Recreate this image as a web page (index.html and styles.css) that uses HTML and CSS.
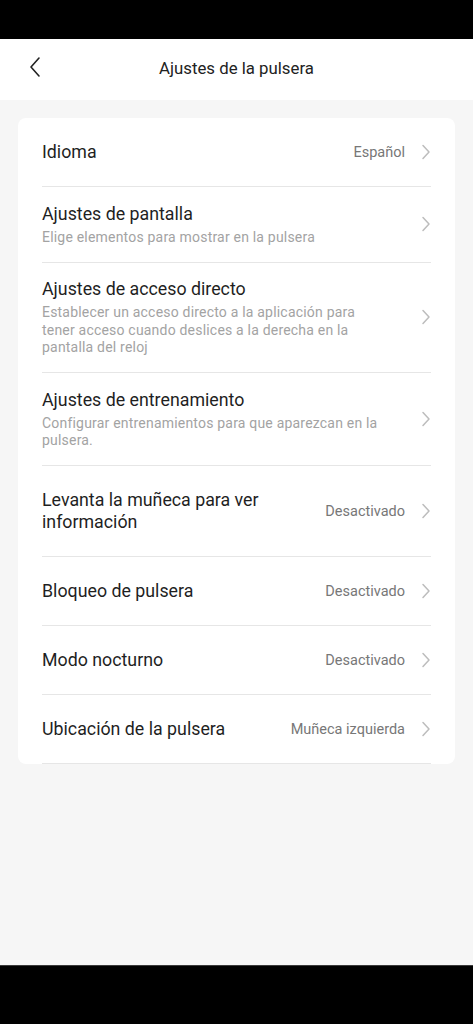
FILE: index.html
```html
<!DOCTYPE html>
<html lang="es">
<head>
<meta charset="utf-8">
<meta name="viewport" content="width=device-width, initial-scale=1">
<title>Ajustes de la pulsera</title>
<link rel="stylesheet" href="styles.css">
</head>
<body>
<div class="screen">
  <div class="status-bar"></div>
  <header class="app-header">
    <button class="back" aria-label="Atrás">
      <svg width="14" height="22" viewBox="0 0 14 22"><path d="M11 2 L3 11 L11 20" fill="none" stroke="#222" stroke-width="1.6" stroke-linecap="round" stroke-linejoin="round"/></svg>
    </button>
    <h1 class="title">Ajustes de la pulsera</h1>
  </header>
  <main class="content">
    <section class="card">
      <div class="row row-plain">
        <div class="row-text"><div class="row-title">Idioma</div></div>
        <span class="row-value">Español</span>
        <svg class="chev" width="10" height="16" viewBox="0 0 10 16"><path d="M2 1.5 L8 8 L2 14.5" fill="none" stroke="#bdbdbd" stroke-width="1.5" stroke-linecap="round" stroke-linejoin="round"/></svg>
      </div>
      <div class="row row-sub">
        <div class="row-text">
          <div class="row-title">Ajustes de pantalla</div>
          <div class="row-desc">Elige elementos para mostrar en la pulsera</div>
        </div>
        <svg class="chev" width="10" height="16" viewBox="0 0 10 16"><path d="M2 1.5 L8 8 L2 14.5" fill="none" stroke="#bdbdbd" stroke-width="1.5" stroke-linecap="round" stroke-linejoin="round"/></svg>
      </div>
      <div class="row row-sub">
        <div class="row-text">
          <div class="row-title">Ajustes de acceso directo</div>
          <div class="row-desc">Establecer un acceso directo a la aplicación para tener acceso cuando deslices a la derecha en la pantalla del reloj</div>
        </div>
        <svg class="chev" width="10" height="16" viewBox="0 0 10 16"><path d="M2 1.5 L8 8 L2 14.5" fill="none" stroke="#bdbdbd" stroke-width="1.5" stroke-linecap="round" stroke-linejoin="round"/></svg>
      </div>
      <div class="row row-sub">
        <div class="row-text">
          <div class="row-title">Ajustes de entrenamiento</div>
          <div class="row-desc">Configurar entrenamientos para que aparezcan en la pulsera.</div>
        </div>
        <svg class="chev" width="10" height="16" viewBox="0 0 10 16"><path d="M2 1.5 L8 8 L2 14.5" fill="none" stroke="#bdbdbd" stroke-width="1.5" stroke-linecap="round" stroke-linejoin="round"/></svg>
      </div>
      <div class="row row-plain">
        <div class="row-text"><div class="row-title narrow">Levanta la muñeca para ver información</div></div>
        <span class="row-value">Desactivado</span>
        <svg class="chev" width="10" height="16" viewBox="0 0 10 16"><path d="M2 1.5 L8 8 L2 14.5" fill="none" stroke="#bdbdbd" stroke-width="1.5" stroke-linecap="round" stroke-linejoin="round"/></svg>
      </div>
      <div class="row row-plain">
        <div class="row-text"><div class="row-title">Bloqueo de pulsera</div></div>
        <span class="row-value">Desactivado</span>
        <svg class="chev" width="10" height="16" viewBox="0 0 10 16"><path d="M2 1.5 L8 8 L2 14.5" fill="none" stroke="#bdbdbd" stroke-width="1.5" stroke-linecap="round" stroke-linejoin="round"/></svg>
      </div>
      <div class="row row-plain">
        <div class="row-text"><div class="row-title">Modo nocturno</div></div>
        <span class="row-value">Desactivado</span>
        <svg class="chev" width="10" height="16" viewBox="0 0 10 16"><path d="M2 1.5 L8 8 L2 14.5" fill="none" stroke="#bdbdbd" stroke-width="1.5" stroke-linecap="round" stroke-linejoin="round"/></svg>
      </div>
      <div class="row row-plain">
        <div class="row-text"><div class="row-title">Ubicación de la pulsera</div></div>
        <span class="row-value">Muñeca izquierda</span>
        <svg class="chev" width="10" height="16" viewBox="0 0 10 16"><path d="M2 1.5 L8 8 L2 14.5" fill="none" stroke="#bdbdbd" stroke-width="1.5" stroke-linecap="round" stroke-linejoin="round"/></svg>
      </div>
    </section>
  </main>
  <div class="nav-bar"></div>
</div>
</body>
</html>
```

FILE: styles.css
```css
html, body {
  margin: 0;
  padding: 0;
}

body {
  font-family: Roboto, "Noto Sans", "Liberation Sans", sans-serif;
  background: #000;
}

.screen {
  width: 473px;
  height: 1024px;
  display: flex;
  flex-direction: column;
  background: #f6f6f6;
}

.status-bar {
  height: 39px;
  background: #000;
  flex: none;
}

.app-header {
  height: 61px;
  box-sizing: border-box;
  padding-bottom: 4px;
  background: #fff;
  display: flex;
  align-items: center;
  justify-content: center;
  position: relative;
  flex: none;
}

.back {
  position: absolute;
  left: 28px;
  top: 16px;
  border: 0;
  background: none;
  padding: 0;
  width: 16px;
  height: 24px;
  display: flex;
  align-items: center;
}

.title {
  margin: 0;
  font-size: 16.8px;
  font-weight: 400;
  color: #222;
}

.content {
  flex: 1;
  padding: 18px 18px 0;
}

.card {
  background: #fff;
  border-radius: 8px;
  padding: 0 24px;
  display: flex;
  flex-direction: column;
}

.row {
  display: flex;
  align-items: center;
  border-bottom: 1px solid #e6e6e6;
  box-sizing: border-box;
}

.row-plain {
  padding: 23px 0;
  min-height: 69px;
}

.row-sub {
  padding: 15.5px 0;
}

.row-text {
  flex: 1;
  min-width: 0;
  display: flex;
  flex-direction: column;
  gap: 4px;
}

.row-title {
  font-size: 17.8px;
  line-height: 22px;
  color: #1f1f1f;
}

.row-title.narrow {
  max-width: 260px;
}

.row-desc {
  font-size: 14px;
  letter-spacing: 0.2px;
  line-height: 17.5px;
  color: #a3a3a3;
  padding-right: 20px;
}

.row-value {
  font-size: 14.5px;
  color: #777;
  margin-left: 12px;
  white-space: nowrap;
}

.chev {
  flex: none;
  margin-left: 16px;
}

.nav-bar {
  height: 58px;
  background: #000;
  border-top: 1px solid #3a3a3a;
  flex: none;
}
```
